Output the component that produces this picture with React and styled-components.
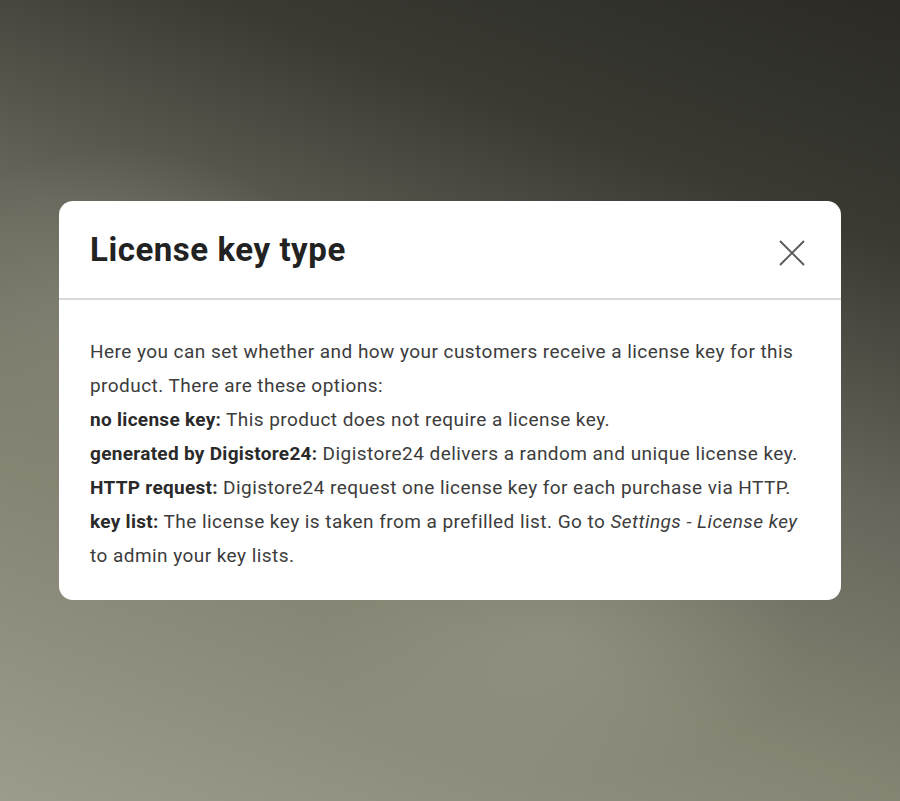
import React from "react";
import styled, { createGlobalStyle } from "styled-components";

const Global = createGlobalStyle`
  html, body { margin: 0; padding: 0; }
  body { font-family: Roboto, "Liberation Sans", Arial, sans-serif; }
`;

const Backdrop = styled.div`
  width: 900px;
  height: 801px;
  display: flex;
  align-items: center;
  justify-content: center;
  background:
    radial-gradient(ellipse 320px 260px at 120px 330px, rgba(150,148,132,0.45), rgba(150,148,132,0) 70%),
    radial-gradient(ellipse 340px 200px at 560px 640px, rgba(170,168,152,0.35), rgba(170,168,152,0) 70%),
    linear-gradient(200deg, #2b2a25 0%, #3a3a33 22%, #65655a 45%, #858473 70%, #9c9b8c 100%);
`;

const Modal = styled.div`
  width: 782px;
  background: #fff;
  border-radius: 14px;
  overflow: hidden;
  display: flex;
  flex-direction: column;
`;

const Header = styled.div`
  height: 97px;
  display: flex;
  align-items: center;
  justify-content: space-between;
  padding: 0 36px 0 31px;
  border-bottom: 2px solid #d9d9d9;
`;

const Title = styled.h2`
  margin: 0;
  font-family: Roboto, "Liberation Sans", sans-serif;
  font-weight: 700;
  font-size: 33px;
  letter-spacing: 0.55px;
  color: #222;
`;

const CloseButton = styled.button`
  border: none;
  background: none;
  padding: 0;
  width: 26px;
  height: 26px;
  margin-top: 6px;
  display: flex;
  align-items: center;
  justify-content: center;
  cursor: pointer;
`;

const Body = styled.div`
  padding: 35px 34px 27px 31px;
  font-family: Roboto, "Liberation Sans", sans-serif;
  font-size: 19px;
  line-height: 34px;
  color: #3c3c3c;
  letter-spacing: 0.45px;
`;

const Line = styled.div``;

const Term = styled.strong`
  font-weight: 700;
  letter-spacing: 0.3px;
  color: #2a2a2a;
`;

const Em = styled.em`
  font-style: italic;
`;

export default function App() {
  return (
    <>
      <Global />
      <Backdrop>
        <Modal>
          <Header>
            <Title>License key type</Title>
            <CloseButton aria-label="Close">
              <svg width="26" height="26" viewBox="0 0 26 26">
                <path d="M1 1 L25 25 M25 1 L1 25" stroke="#5a5a5a" strokeWidth="1.9" fill="none" />
              </svg>
            </CloseButton>
          </Header>
          <Body>
            <Line>
              Here you can set whether and how your customers receive a license key for this product. There are these options:
            </Line>
            <Line>
              <Term>no license key:</Term> This product does not require a license key.
            </Line>
            <Line>
              <Term>generated by Digistore24:</Term> Digistore24 delivers a random and unique license key.
            </Line>
            <Line>
              <Term>HTTP request:</Term> Digistore24 request one license key for each purchase via HTTP.
            </Line>
            <Line>
              <Term>key list:</Term> The license key is taken from a prefilled list. Go to <Em>Settings - License key</Em> to admin your key lists.
            </Line>
          </Body>
        </Modal>
      </Backdrop>
    </>
  );
}
